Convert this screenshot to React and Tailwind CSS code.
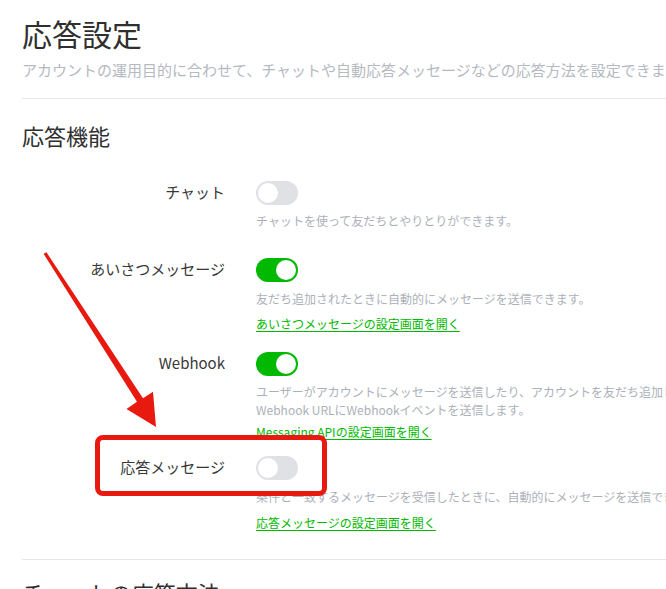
import React from "react";

const font = { fontFamily: '"Noto Sans CJK JP", "Noto Sans", sans-serif' };

function Toggle({ on }) {
  return (
    <div
      className={
        "relative h-[24px] w-[42px] shrink-0 rounded-full " +
        (on ? "bg-[#00b900]" : "bg-[#dfe1e5]")
      }
    >
      <div
        className={
          "absolute top-[2px] h-[20px] w-[20px] rounded-full bg-white " +
          (on ? "right-[2px]" : "left-[2px]")
        }
      />
    </div>
  );
}

function Row({ label, on, children, className }) {
  return (
    <div className={"flex " + className}>
      <div className="w-[204px] shrink-0 pr-[1px] text-right text-[15px] leading-[22px] text-[#383838]">
        {label}
      </div>
      <div className="ml-[30px] flex flex-col">
        <Toggle on={on} />
        {children}
      </div>
    </div>
  );
}

function Desc({ children, className }) {
  return (
    <div
      className={
        "whitespace-nowrap text-[12px] leading-[18px] text-[#acb1b9] " +
        (className || "")
      }
    >
      {children}
    </div>
  );
}

function Link({ children, className }) {
  return (
    <div
      className={
        "whitespace-nowrap text-[12px] leading-[18px] text-[#00b900] underline underline-offset-2 " +
        (className || "")
      }
    >
      {children}
    </div>
  );
}

export default function App() {
  return (
    <div
      className="relative h-[589px] w-[666px] overflow-hidden bg-white"
      style={font}
    >
      <div className="flex flex-col pl-[22px] pt-[15px]">
        <h1 className="text-[30px] leading-[36px] text-[#2f2f2f]">応答設定</h1>
        <p className="mt-[9px] whitespace-nowrap text-[15px] leading-[20px] text-[#b5b9c1]">
          アカウントの運用目的に合わせて、チャットや自動応答メッセージなどの応答方法を設定できます。
        </p>
        <div className="mt-[18px] h-px w-[700px] bg-[#e6e6e6]" />
        <h2 className="mt-[21px] text-[22px] leading-[30px] text-[#2f2f2f]">応答機能</h2>

        <Row label="チャット" on={false} className="mt-[31px]">
          <Desc className="mt-[7px]">チャットを使って友だちとやりとりができます。</Desc>
        </Row>

        <Row label="あいさつメッセージ" on={true} className="mt-[28px]">
          <Desc className="mt-[8px]">友だち追加されたときに自動的にメッセージを送信できます。</Desc>
          <Link className="mt-[7px]">あいさつメッセージの設定画面を開く</Link>
        </Row>

        <Row label="Webhook" on={true} className="mt-[19px]">
          <Desc className="mt-[7px]">
            ユーザーがアカウントにメッセージを送信したり、アカウントを友だち追加したりしたときに、
            <br />
            Webhook URLにWebhookイベントを送信します。
          </Desc>
          <Link className="mt-[4px]">Messaging APIの設定画面を開く</Link>
        </Row>

        <Row label="応答メッセージ" on={false} className="mt-[15px]">
          <Desc className="mt-[8px]">
            条件と一致するメッセージを受信したときに、自動的にメッセージを送信できます。
          </Desc>
          <Link className="mt-[8px]">応答メッセージの設定画面を開く</Link>
        </Row>

        <div className="mt-[27px] h-px w-[700px] bg-[#e6e6e6]" />
        <h2 className="mt-[17px] text-[22px] leading-[30px] text-[#2f2f2f]">
          チャットの応答方法
        </h2>
      </div>

      {/* annotation: red box */}
      <div className="pointer-events-none absolute left-[95px] top-[435px] h-[61px] w-[232px] rounded-[8px] border-[5px] border-[#e81a10]" />

      {/* annotation: arrow */}
      <svg
        className="pointer-events-none absolute left-0 top-0"
        width="666"
        height="589"
        viewBox="0 0 666 589"
      >
        <polygon
          points="46.4,252.2 143,398.2 153,391.8 156,427 126.5,409 137,401.8 43.6,253.8"
          fill="#e81a10"
        />
      </svg>
    </div>
  );
}
